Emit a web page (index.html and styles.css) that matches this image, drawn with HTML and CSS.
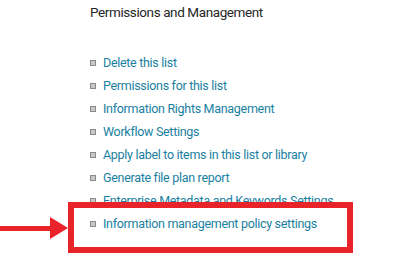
FILE: index.html
```html
<!DOCTYPE html>
<html lang="en">

<head>
    <meta charset="UTF-8">
    <meta name="viewport" content="width=device-width, initial-scale=1.0">
    <title>Permissions and Management</title>
    <link rel="stylesheet" href="styles.css">
</head>

<body>
    <div class="page">
        <h3 class="title">Permissions and Management</h3>
        <ul class="links">
            <li><a href="#">Delete this list</a></li>
            <li><a href="#">Permissions for this list</a></li>
            <li><a href="#">Information Rights Management</a></li>
            <li><a href="#">Workflow Settings</a></li>
            <li><a href="#">Apply label to items in this list or library</a></li>
            <li><a href="#">Generate file plan report</a></li>
            <li><a href="#">Enterprise Metadata and Keywords Settings</a></li>
            <li><a href="#">Information management policy settings</a></li>
        </ul>
        <!-- annotation -->
        <div class="mark"></div>
        <div class="arrow">
            <div class="line"></div>
            <div class="head"></div>
        </div>
    </div>
</body>

</html>
```

FILE: styles.css
```css
* {
    list-style: none;
    margin: 0;
    padding: 0;
}

body {
    background: #fff;
    font-family: "Roboto", "Segoe UI", sans-serif;
}

.page {
    position: relative;
    width: 409px;
    height: 258px;
    padding-left: 90px;
    box-sizing: border-box;
}

.title {
    padding-top: 3px;
    font-size: 13.5px;
    font-weight: normal;
    letter-spacing: -0.4px;
    line-height: 18px;
    color: #262626;
}

.links {
    padding-top: 30px;
}

.links li {
    display: flex;
    align-items: center;
    height: 23px;
    font-size: 12.5px;
    letter-spacing: -0.3px;
}

.links li::before {
    content: "";
    width: 4px;
    height: 4px;
    margin-right: 7px;
    border: 1px solid #8a8a8a;
    background-color: #c8c8c8;
}

.links a {
    color: #1a7f9f;
    text-decoration: none;
}

.mark {
    position: absolute;
    left: 68px;
    top: 202px;
    width: 273px;
    height: 39px;
    border: 6px solid #e8232a;
}

.arrow {
    position: absolute;
    left: 0;
    top: 217px;
    display: flex;
    align-items: center;
}

.arrow .line {
    width: 50px;
    height: 5px;
    background-color: #e8232a;
}

.arrow .head {
    width: 0;
    height: 0;
    border-top: 11px solid transparent;
    border-bottom: 11px solid transparent;
    border-left: 18px solid #e8232a;
}
```
